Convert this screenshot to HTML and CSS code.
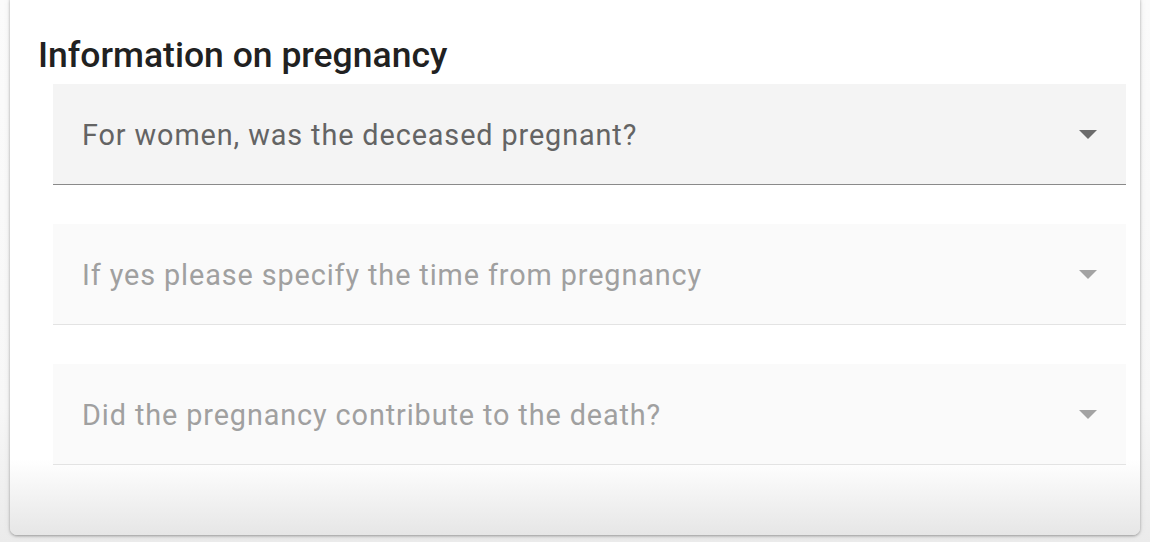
FILE: index.html
```html
<!DOCTYPE html>
<html lang="en">
<head>
<meta charset="utf-8">
<title>Information on pregnancy</title>
<link rel="stylesheet" href="styles.css">
</head>
<body>
  <section class="card">
    <h2 class="card-title">Information on pregnancy</h2>
    <div class="fields">
      <div class="select select-active">
        <span class="select-label">For women, was the deceased pregnant?</span>
        <svg class="select-arrow" width="18" height="9" viewBox="0 0 18 9"><path d="M0 0h18L9 9z"/></svg>
      </div>
      <div class="select select-disabled">
        <span class="select-label">If yes please specify the time from pregnancy</span>
        <svg class="select-arrow" width="18" height="9" viewBox="0 0 18 9"><path d="M0 0h18L9 9z"/></svg>
      </div>
      <div class="select select-disabled">
        <span class="select-label">Did the pregnancy contribute to the death?</span>
        <svg class="select-arrow" width="18" height="9" viewBox="0 0 18 9"><path d="M0 0h18L9 9z"/></svg>
      </div>
    </div>
  </section>
</body>
</html>
```
FILE: styles.css
```css
html, body {
  margin: 0;
  padding: 0;
}
body {
  width: 1150px;
  height: 542px;
  overflow: hidden;
  background: linear-gradient(to bottom, #fbfbfb 0%, #f7f7f7 75%, #ebebeb 100%);
  font-family: Roboto, "Noto Sans", sans-serif;
  padding: 0 10px;
  box-sizing: border-box;
}
.card {
  margin-top: -6px;
  height: 541px;
  box-sizing: border-box;
  border-radius: 7px;
  background: linear-gradient(to bottom, #ffffff 0%, #ffffff 86%, #e6e6e6 100%);
  box-shadow: 0 1px 3px rgba(0,0,0,0.35), 0 0 8px rgba(0,0,0,0.06);
  padding: 42px 14px 0 29px;
}
.card-title {
  margin: 0 0 0 -1px;
  font-size: 35.5px;
  font-weight: 500;
  line-height: 38px;
  color: #212121;
  letter-spacing: 0;
}
.fields {
  margin: 10px 0 0 14px;
  display: flex;
  flex-direction: column;
  gap: 39px;
}
.select {
  height: 101px;
  box-sizing: border-box;
  display: flex;
  align-items: center;
  justify-content: space-between;
  padding: 0 29px 0 29px;
}
.select-label {
  font-size: 28.8px;
  letter-spacing: 0.9px;
  padding-top: 2px;
}
.select-arrow {
  display: block;
  flex: none;
}
.select-active {
  background: #f4f4f4;
  border-bottom: 1px solid #8a8a8a;
}
.select-active .select-label { color: #646464; }
.select-active .select-arrow { fill: #6b6b6b; }
.select-disabled {
  background: #fafafa;
  border-bottom: 1px solid #e3e3e3;
}
.select-disabled .select-label { color: #a0a0a0; }
.select-disabled .select-arrow { fill: #a3a3a3; }
```
